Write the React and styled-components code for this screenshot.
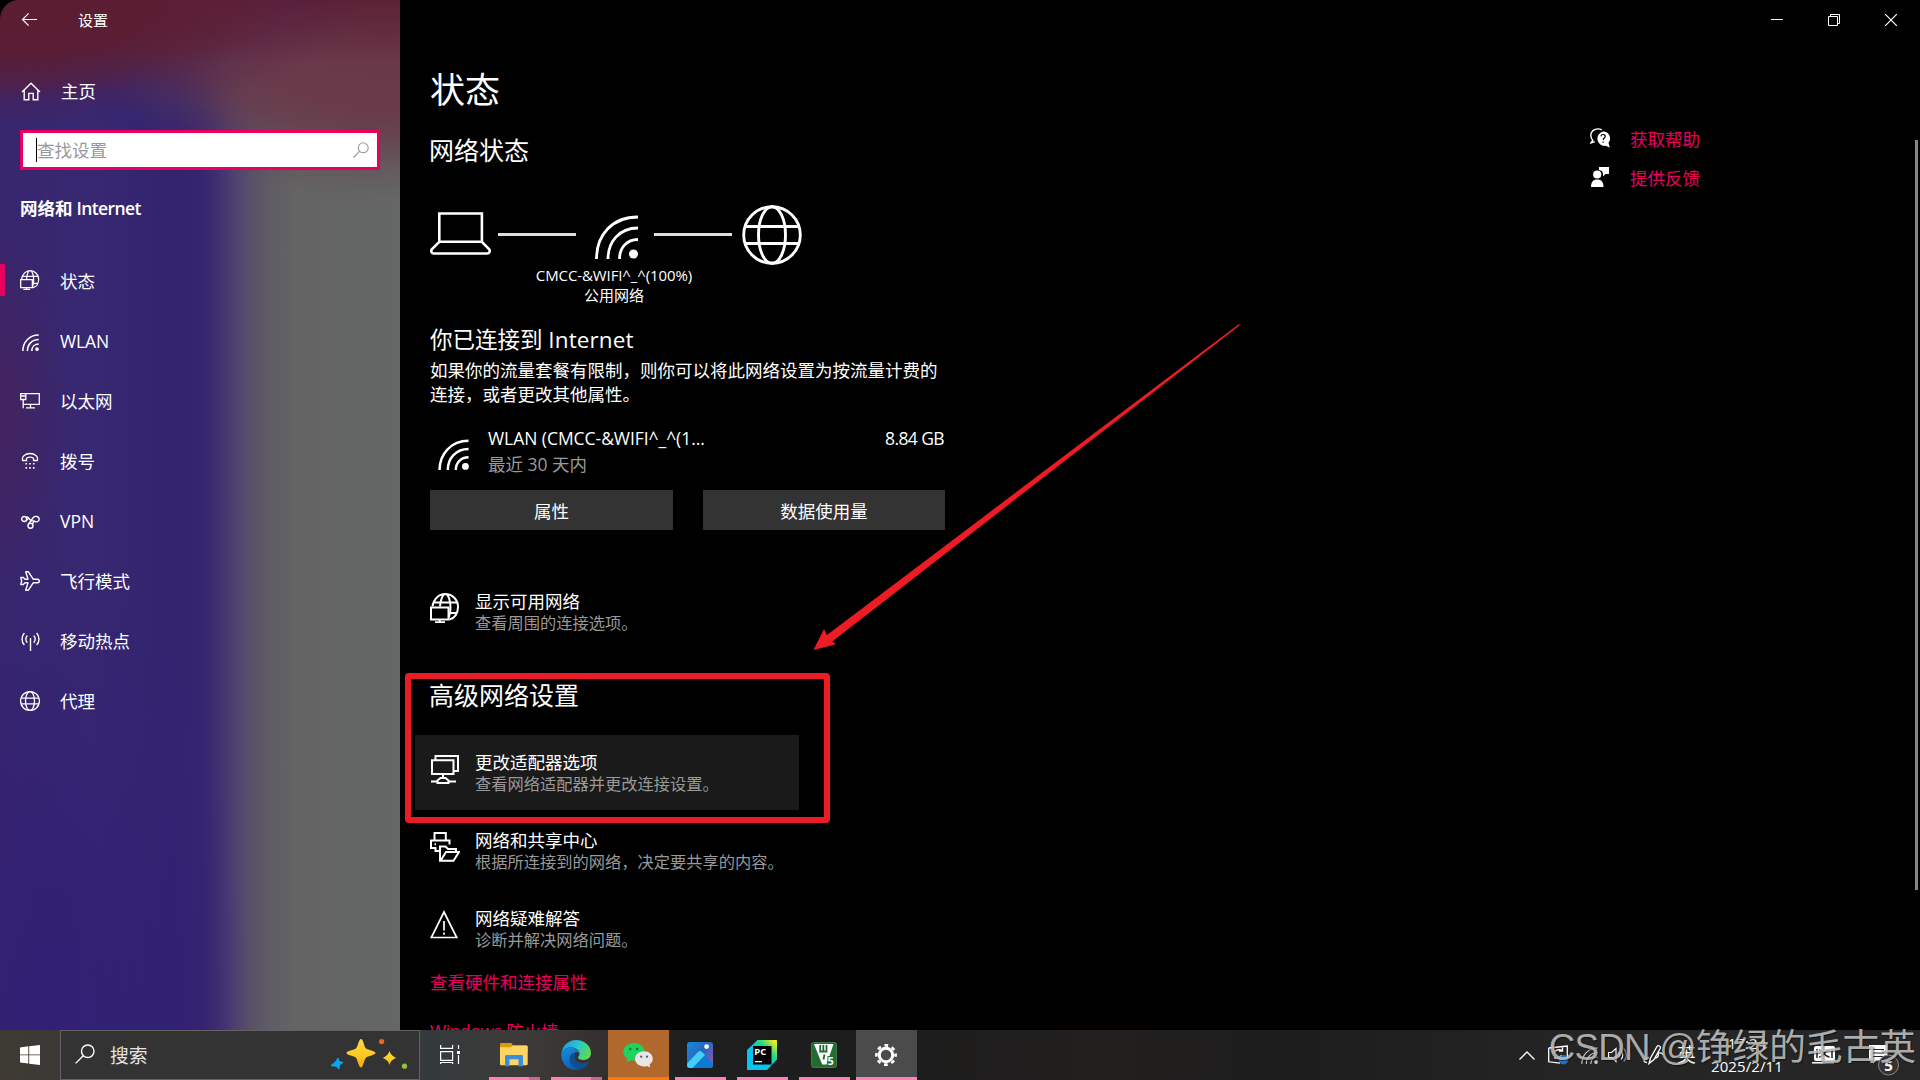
import React from 'react'
import styled, { createGlobalStyle, css } from 'styled-components'

const accent = '#e9005f'
const mark = '#ed1c24'

const GlobalStyle = createGlobalStyle`
  * { box-sizing: border-box; margin: 0; padding: 0; }
  body {
    background: #000;
    color: #fff;
    overflow: hidden;
    font-family: "Open Sans", "Noto Sans CJK SC", sans-serif;
    font-size: 17.5px;
  }
  svg { display: block; flex: none; }
`

const Desktop = styled.div`
  position: relative;
  width: 1920px;
  height: 1080px;
  display: flex;
  flex-direction: column;
  overflow: hidden;
  background: #000;
`

const Window = styled.div`
  display: flex;
  height: 1030px;
  overflow: hidden;
`

const Sidebar = styled.aside`
  width: 400px;
  flex: none;
  border-top-left-radius: 19px;
  display: flex;
  flex-direction: column;
  background:
    radial-gradient(ellipse 360px 125px at 0 0, #5b1d32, rgba(91, 29, 50, .96) 42%, rgba(90, 30, 56, .72) 64%, rgba(82, 30, 74, .3) 81%, rgba(80, 30, 80, 0)),
    linear-gradient(180deg, rgba(91, 29, 50, .85), rgba(91, 29, 50, 0) 62px),
    radial-gradient(ellipse 310px 200px at 385px 0, #673748 0, #6a394a 52%, rgba(104, 58, 74, .8) 68%, rgba(100, 66, 80, .35) 84%, rgba(100, 80, 85, 0) 100%),
    radial-gradient(ellipse 70px 190px at 0 410px, rgba(72, 34, 88, .75), rgba(72, 34, 88, 0)),
    radial-gradient(ellipse 200px 480px at 50px 1030px, rgba(46, 28, 118, .7), rgba(46, 28, 118, 0)),
    linear-gradient(90deg, #38266e 0, #372871 90px, #33236f 175px, #352571 203px, #402f70 218px, #4d4170 234px, #585069 250px, #5f5c65 270px, #636463 295px, #646765 400px);
`

const TitleRow = styled.div`
  height: 40px;
  display: flex;
  align-items: center;
  padding: 0 0 2px 20px;
  font-size: 15px;
  gap: 38px;
  svg { margin-top: 2px; }
`

const NavItem = styled.div`
  height: 60px;
  display: flex;
  align-items: center;
  gap: 20px;
  padding: 1px 0 0 15px;
  border-left: 5px solid transparent;
  border-image: ${({ $active }) => ($active
    ? `linear-gradient(transparent 15px, ${accent} 15px, ${accent} 45px, transparent 45px) 1`
    : 'none')};
  border-right: 0;
  svg { margin-top: -2px; }
`

const NavIcon = styled.span`
  width: 20px;
  display: flex;
  justify-content: center;
  margin-top: ${({ $drop = 0 }) => $drop * 2}px;
`

const HomeItem = styled(NavItem)`
  margin-top: 21px;
  padding: 0 0 1px 16px;
  svg { margin-top: 0; }
`

const SearchBox = styled.div`
  margin: 9px 20px 0;
  height: 40px;
  flex: none;
  border: 3px solid ${accent};
  background: #fff;
  color: #999;
  display: flex;
  align-items: center;
  padding: 0 8px 0 13px;
`

const Caret = styled.i`
  width: 1px;
  height: 24px;
  background: #000;
`

const Placeholder = styled.span`
  flex: 1;
  margin-top: -2px;
`

const Grow = styled.span`
  flex: 1;
`

const GroupName = styled.div`
  font-weight: 600;
  line-height: 30px;
  padding-left: 20px;
  margin: 23px 0 27px;
  letter-spacing: -.6px;
  b {
    font-weight: 700;
    letter-spacing: 0;
  }
`

const Main = styled.main`
  flex: 1;
  display: flex;
  flex-direction: column;
`

const Controls = styled.div`
  height: 40px;
  flex: none;
  display: flex;
  justify-content: flex-end;
  padding-right: 1px;
`

const Control = styled.div`
  width: 57px;
  height: 40px;
  display: grid;
  place-items: center;
`

const Body = styled.div`
  display: flex;
  flex: 1;
`

const Content = styled.section`
  width: 1190px;
  flex: none;
  padding: 28px 0 0 30px;
`

const PageTitle = styled.h1`
  font-size: 35px;
  line-height: 44px;
  font-weight: 400;
`

const SectionTitle = styled.h2`
  font-size: 25px;
  line-height: 30px;
  font-weight: 400;
  text-indent: -1px;
  margin-top: ${({ $top }) => $top}px;
`

const Diagram = styled.div`
  display: flex;
  align-items: center;
  height: 60px;
  margin-top: 40px;
`

const Wire = styled.span`
  width: 78px;
  height: 3px;
  background: #dedede;
  margin: -2px ${({ $right }) => $right}px 0 ${({ $left }) => $left}px;
`

const Caption = styled.div`
  width: 180px;
  margin-left: 94px;
  text-align: center;
  font-size: 15px;
  line-height: 20px;
`

const Connected = styled.h3`
  font-size: 22.5px;
  line-height: 30px;
  font-weight: 400;
  margin-top: 20px;
`

const Latin = styled.span`
  letter-spacing: ${({ $track }) => $track}px;
`

const Desc = styled.p`
  width: 515px;
  line-height: 24px;
  margin-top: 3px;
`

const Usage = styled.div`
  display: flex;
  width: 514px;
  height: 50px;
  margin-top: 20px;
  padding-left: 8px;
  line-height: 24px;
  svg { margin: 13px 19px 0 0; }
`

const UsageText = styled.div`
  flex: 1;
  display: flex;
  flex-direction: column;
  gap: 2px;
`

const Muted = styled.span`
  color: #999;
`

const Buttons = styled.div`
  display: grid;
  grid-template-columns: 243px 242px;
  gap: 30px;
  margin-top: 14px;
`

const Button = styled.button`
  height: 40px;
  border: 0;
  background: #333;
  color: #fff;
  font: inherit;
  padding-top: 1px;
`

const Row = styled.div`
  width: 384px;
  height: 75px;
  margin: ${({ $top = 3 }) => $top}px 0 0 -15px;
  padding: 15px 0 0 15px;
  display: flex;
  background: ${({ $hover }) => ($hover ? '#1a1a1a' : 'transparent')};
  svg { margin: 4px 15px 0 0; }
`

const RowText = styled.div`
  white-space: nowrap;
  line-height: 24px;
  small {
    display: block;
    font-size: 16.25px;
    line-height: 20px;
    color: #999;
  }
`

const Link = styled.a`
  display: block;
  color: ${accent};
  line-height: 24px;
  margin-top: ${({ $top }) => $top || 0}px;
`

const Help = styled.div`
  flex: 1;
  padding-top: 87px;
`

const HelpRow = styled.div`
  display: flex;
  gap: 20px;
  height: 39px;
  svg { margin-top: 1px; }
`

const Scrollbar = styled.div`
  width: 3px;
  height: 750px;
  margin: 100px 2px 0 0;
  background: #858585;
`

const Taskbar = styled.footer`
  height: 50px;
  flex: none;
  display: flex;
  background: linear-gradient(90deg, #3f3b34 0, #3a3935 60px, #3a3935 400px, #343a3c 430px, #3d3b39 520px, #34302f 600px, #1f1f1f 680px, #1c1c1c 880px, #221f1e 1100px, #1d1d1d 1300px, #242424 1560px, #272727 1920px);
`

const Start = styled.div`
  width: 60px;
  padding: 15px 0 0 20px;
`

const TaskSearch = styled.div`
  width: 360px;
  height: 50px;
  border: 1px solid #626262;
  background: #333;
  color: #e4e4e4;
  display: flex;
  align-items: center;
  padding: 0 10px 2px 14px;
  gap: 15px;
  font-size: 18.75px;
`

const TaskView = styled.div`
  width: 64px;
  padding: 15px 0 0 20px;
`

const TaskApp = styled.div`
  width: 61px;
  height: 50px;
  margin-right: 1px;
  display: flex;
  flex-direction: column;
  align-items: center;
  justify-content: space-between;
  background: ${({ $bg }) => $bg || 'transparent'};
`

const AppIcon = styled.div`
  height: 47px;
  display: grid;
  place-items: center;
  padding: 3px 2px 0 0;
`

const Underline = styled.span`
  height: 3px;
  width: ${({ $full }) => ($full ? '61px' : '51px')};
  background: ${({ $color }) => $color || '#ff80b5'};
  ${({ $stack }) => $stack && css`
    background: linear-gradient(90deg, #ff80b5 40px, #c4688f 40px);
  `}
`

const Tray = styled.div`
  margin-left: auto;
  width: 415px;
  display: flex;
  align-items: flex-start;
  padding-top: 12px;
`

const TrayCell = styled.div`
  width: ${({ $w }) => $w}px;
  height: 26px;
  display: flex;
  align-items: center;
  flex: none;
`

const Clock = styled.div`
  width: 102px;
  margin-top: -10px;
  padding-right: 28px;
  flex: none;
  text-align: center;
  font-size: 15px;
  line-height: 23px;
  white-space: nowrap;
  letter-spacing: .1px;
`

const Ime = styled.span`
  font-size: 18.75px;
  line-height: 22px;
  margin: -1px 0 0 -1px;
`

/* marks laid over the whole screen */
const Frame = styled.div`
  position: absolute;
  left: 405px;
  top: 673px;
  width: 425px;
  height: 150px;
  border: 6px solid ${mark};
  border-radius: 4px;
`

const Arrow = styled.svg`
  position: absolute;
  left: 800px;
  top: 310px;
`

const Watermark = styled.div`
  position: absolute;
  right: 4px;
  top: 1023px;
  line-height: 50px;
  font-family: "Liberation Sans", "Noto Sans CJK SC", sans-serif;
  font-size: 36.7px;
  white-space: nowrap;
  color: rgba(205, 205, 205, .82);
  text-shadow: 1px 1px 1px rgba(0, 0, 0, .5);
`

const line = { fill: 'none', stroke: '#fff' }

const BackIcon = () => (
  <svg width="20" height="20" viewBox="0 0 20 20" {...line} strokeWidth="1.2">
    <path d="M17 9.5H2.5M8.6 3.4 2.5 9.5l6.1 6.1" />
  </svg>
)

const HomeIcon = () => (
  <svg width="20" height="20" viewBox="0 0 20 20" {...line} strokeWidth="1.4">
    <path d="M1 11 10 2.2 19 11M3.2 9.2v9.6h4.6v-6.4h4.4v6.4h4.6V9.2" />
  </svg>
)

const SearchIcon = ({ size = 16, color = '#999', w = 1.1 }) => (
  <svg width={size} height={size} viewBox="0 0 16 16" fill="none" stroke={color} strokeWidth={w}>
    <circle cx="10.2" cy="5.8" r="5" />
    <path d="M6.6 9.4.5 15.5" />
  </svg>
)

const GlobePcIcon = ({ size = 20, w = 1.9 }) => (
  <svg width={size} height={size} viewBox="0 0 30 30" {...line} strokeWidth={w}>
    <path d="M2.5 13.5C3.3 6.5 8.6 1 15.2 1 22.4 1 28 6.8 28 14c0 6.5-3.6 11.5-8.5 12.5M3.5 9.5h23.5M20 20h7M10 13.5C10.5 7 12.6 1 15.2 1c3.2 0 5.3 6.5 5.3 13.5 0 4-.6 7.5-1.6 9.7" />
    <path d="M1 14.5h17.5v12H1zM9.7 26.5v3M5 29.2h10" />
  </svg>
)

const WifiIcon = ({ size = 20, w = 1.6, faded }) => (
  <svg width={size} height={size} viewBox="0 0 20 20" {...line} strokeWidth={w} opacity={faded ? 0.75 : 1}>
    <path d="M1 20C1 9.5 8.5 1.2 19.7 1.2M6.3 20C6.3 12.5 11.6 6.5 19.7 6.5M11.5 20c0-4.8 3.3-8.3 8.2-8.3" />
    <circle cx="17.7" cy="17.7" r="2.2" fill="#fff" stroke="none" />
  </svg>
)

const EthernetIcon = () => (
  <svg width="20" height="18" viewBox="0 0 20 18" {...line} strokeWidth="1.3">
    <path d="M6 1.7h13.3v10.6H3.2M10.5 12.3v3.4M6 15.9h9M.7 1.7h5.1v5.8H.7zM3.2 7.5v8.8M.7 4h5" />
  </svg>
)

const DialIcon = () => (
  <svg width="18" height="18" viewBox="0 0 18 18" {...line} strokeWidth="1.3">
    <path d="M1.7 8.5C.3 4.3 4.5 1.5 9 1.5s8.7 2.8 7.3 7H12.5V6.2C10.5 5 7.5 5 5.5 6.2v2.3z" />
    <path d="M4.5 11.8h1.6M8.2 11.8h1.6M11.9 11.8h1.6M4.5 15.9h1.6M8.2 15.9h1.6M11.9 15.9h1.6" strokeWidth="1.6" />
  </svg>
)

const VpnIcon = () => (
  <svg width="19" height="14" viewBox="0 0 19 14" {...line} strokeWidth="1.4">
    <circle cx="3.2" cy="4" r="2.5" />
    <circle cx="9.5" cy="10.7" r="2.5" />
    <path d="M5.5 5.2 8 3M5.5 2C7.2 1.5 8 3 8.8 4.300s2 2.200 3.700 1.200M7.600 8.800l4.700-6.300c1.500-1.800 5.900-1.500 5.900 1.700 0 2.700-3.300 3.300-5 1.800l-1.600 2.800" />
  </svg>
)

const PlaneIcon = () => (
  <svg width="20" height="20" viewBox="0 0 20 20" {...line} strokeWidth="1.4" strokeLinejoin="round">
    <path d="M.8 6.500h2.500L5 8.200h3L5.700.8h2.700l4.800 7.400h4.200c2.500 0 2.500 3.600 0 3.600h-4.200l-4.800 7.400H5.700L8 11.800H5l-1.700 1.700H.8L1.700 10z" />
  </svg>
)

const HotspotIcon = () => (
  <svg width="19" height="19" viewBox="0 0 19 19" {...line} strokeWidth="1.4">
    <path d="M3.400 1C.2 4.300.2 9.700 3.400 13M6.300 3.500c-2 2-2 5.200 0 7.200M15.600 1c3.200 3.300 3.200 8.700 0 12M12.700 3.500c2 2 2 5.200 0 7.200M9.500 6v13" />
  </svg>
)

const GlobeIcon = ({ size = 20, w = 2.9 }) => (
  <svg width={size} height={size} viewBox="0 0 60 60" {...line} strokeWidth={w}>
    <circle cx="30" cy="30" r="28.3" />
    <ellipse cx="30" cy="30" rx="13.5" ry="28.3" />
    <path d="M3 21.500h54M3 38.500h54" />
  </svg>
)

const LaptopIcon = styled(({ className }) => (
  <svg className={className} width="61" height="43" viewBox="0 0 61 43" {...line} strokeWidth="2.6">
    <path d="M9.300 1.500h42.600v28.300H9.300zM9.300 29.800l-7.500 7.500c-1.300 2 0 4.200 2 4.200h53.400c2 0 3.300-2.200 2-4.200l-7.300-7.500" />
  </svg>
))`
  margin-top: -3px;
`

const BigWifi = styled(({ className }) => (
  <svg className={className} width="43" height="60" viewBox="0 0 43 60" {...line} strokeWidth="2.8">
    <path d="M1.500 54C1.500 30 17 12 43 12M13 54c0-17 11-31 30-31M24.500 54c0-11 7-19.500 18.500-19.500" />
    <circle cx="38.500" cy="49" r="4.500" fill="#fff" stroke="none" />
  </svg>
))`
  margin-top: -1px;
`

const AdapterIcon = () => (
  <svg width="30" height="30" viewBox="0 0 30 30" {...line} strokeWidth="2">
    <path d="M5.500 6V2H28v15h-4M2 6.300h21.500V20H2zM13 20v4M1 27.500h6.500M18.500 27.500H26M7.500 29v-2.500l3-2.500h5l3 2.500V29z" />
  </svg>
)

const SharingIcon = () => (
  <svg width="30" height="30" viewBox="0 0 30 30" {...line} strokeWidth="2">
    <path d="M4.500 8V1h11.300v7M10 19H5.500v-3H1V8.500h18.500v4M4.500 12.300H6" />
    <path d="M10 29V14.500h5.500L18 17h8v3M10.500 28.700 16 20h13l-5.500 8.700z" />
  </svg>
)

const WarnIcon = () => (
  <svg width="30" height="30" viewBox="0 0 30 30" {...line} strokeWidth="1.7">
    <path d="M14 2 1.300 27.500h25.400zM14 11v9.500M14 22.500v2.200" />
  </svg>
)

const AskIcon = () => (
  <svg width="20" height="20" viewBox="0 0 20 20">
    <path d="M11.700 1.800C7.500-.5 1 1.700.8 7.300c0 2.300.9 3.900 1.900 5L.8 15l4-1.300" fill="none" stroke="#fff" strokeWidth="1.4" />
    <path d="M13.300 3.500a6.700 6.900 0 0 1 5.200 11.300l1.300 4.700-4.300-1.700A6.800 7 0 1 1 13.300 3.500z" fill="#fff" />
    <path d="M11 8.400c.3-2.700 4.400-2.400 4.200.1-.1 1.500-2 1.700-2 3.600M13.200 13.400v1.400" fill="none" stroke="#000" strokeWidth="1.2" />
  </svg>
)

const FeedbackIcon = () => (
  <svg width="20" height="20" viewBox="0 0 20 20" fill="#fff">
    <path d="M9 0h10v7h-3.500L13 9.500V7l-1-3-3-1z" />
    <circle cx="7.200" cy="7.500" r="4.100" />
    <path d="M1 20c0-5 2-7.500 6.200-7.500S13.500 15 13.500 20z" />
  </svg>
)

const StartIcon = () => (
  <svg width="20" height="20" viewBox="0 0 20 20" fill="#fff">
    <path d="M0 2.500 8.300 1.300v8.100H0zM9.200 1.200 20 0v9.400H9.200zM0 10.300h8.300v8.300L0 17.500zM9.200 10.300H20V20L9.200 18.700z" />
  </svg>
)

const SparkleIcon = () => (
  <svg width="78" height="32" viewBox="0 0 78 32">
    <defs>
      <linearGradient id="gold" x1="0" y1="0" x2="0" y2="1">
        <stop offset="0" stopColor="#ffd84a" />
        <stop offset=".6" stopColor="#fdc91c" />
        <stop offset="1" stopColor="#f5a21a" />
      </linearGradient>
    </defs>
    <path d="M30 1c2.200 0 3.200 8 5 9.500S44.500 13 44.500 15 37 17.800 35 19.700 32.200 29.500 30 29.500s-3.400-8-5-9.800-9.500-2.500-9.500-4.700 7.700-2.800 9.500-4.500S27.800 1 30 1z" fill="url(#gold)" />
    <path d="M58.500 13c1.300 3.500 2.700 5 6.800 7-4.100 1.600-5.500 3.200-6.800 7-1.300-3.800-2.700-5.400-6.800-7 4.100-2 5.500-3.500 6.800-7z" fill="url(#gold)" />
    <path d="M7 20.500c.5 3 1 3.500 4.500 4-3 1.500-3.700 2-3.500 6-2-2.500-3-3-7.500-3 3-2 5.500-3 6.500-7z" fill="#10a5ea" stroke="#10a5ea" strokeWidth="1.5" strokeLinejoin="round" />
    <circle cx="50.600" cy="3.600" r="2.600" fill="#f26522" />
    <circle cx="73.500" cy="28.200" r="2.600" fill="#8cc63f" />
  </svg>
)

const TaskViewIcon = () => (
  <svg width="20" height="20" viewBox="0 0 20 20" {...line} strokeWidth="1.2">
    <path d="M.6 0v3.400h12V0M.6 6.600h12v8.800H.6zM.6 19v-1.500h12V19M18.500 0v4M18.500 10v9" />
    <path d="M17 6h3v3h-3z" fill="#fff" stroke="none" />
  </svg>
)

const FolderIcon = () => (
  <svg width="28" height="24" viewBox="0 0 28 24">
    <path d="M0 1.500C0 .5.500 0 1.500 0h9.700l2 2.500H26c1 0 1.700.7 1.700 1.500V9H0z" fill="#e09a09" />
    <path d="M0 4.200h11l2-1.700h13c1 0 1.700.7 1.700 1.500v16.800c0 1-.7 1.500-1.700 1.500H1.500c-1 0-1.500-.5-1.500-1.500z" fill="#fed463" />
    <path d="M5 23.300V13.500c0-1 .6-1.500 1.500-1.500h15c1 0 1.500.5 1.500 1.500v9.800h-4.500v-7h-9v7z" fill="#3a8fdb" />
  </svg>
)

const EdgeIcon = () => (
  <svg width="30" height="30" viewBox="0 0 30 30">
    <defs>
      <linearGradient id="edgeTop" x1="0" y1=".3" x2="1" y2=".6">
        <stop offset="0" stopColor="#1f9fe0" />
        <stop offset=".5" stopColor="#2cc3cf" />
        <stop offset="1" stopColor="#5fdd4a" />
      </linearGradient>
      <linearGradient id="edgeLow" x1="0" y1="0" x2=".7" y2="1">
        <stop offset="0" stopColor="#1890e0" />
        <stop offset="1" stopColor="#0b55a4" />
      </linearGradient>
    </defs>
    <path d="M.5 13C1.500 5.500 7.500 0 15 0c8.500 0 15 6 15 13 0 4-3 7-7.300 7-3.500 0-5.700-1.200-5.700-2.500 0-1 1.500-1.500 1.500-4 0-3.500-4-6-8.500-6C5.500 7.500 2 9.500.5 13z" fill="url(#edgeTop)" />
    <path d="M.3 16C-.5 10 5 7.500 10 7.500c4.500 0 8.500 2.500 8.500 6-2-2.500-7.500-1.800-7.800 4-.2 6 5.500 9.500 12 7.500l4.800-2C25 27.500 20 30 15 30 7 30 1 24 .3 16z" fill="url(#edgeLow)" />
    <path d="M10.700 13.800C6.500 18 8.500 28 18 29.700c4-.8 7.500-3.300 9.700-7 .2-.8-.4-1-1-.6-5 2.500-11.500.9-12.900-3.600-.5-1.700-.1-3.500 1-4.700-1.500-.6-3-.5-4.100 0z" fill="#0d4f97" />
  </svg>
)

const WechatIcon = () => (
  <svg width="30" height="26" viewBox="0 0 30 26">
    <path d="M11 1C5 1 .3 4.800.3 9.800c0 3 1.500 5.300 3.900 6.900L3.500 20.500l4.200-2.300c6.500 1.700 13.800-2 13.800-8.400C21.500 4.800 17 1 11 1z" fill="#1fd15d" />
    <path d="M21 9.300c-5 0-9 3.300-9 7.500s4 7.600 9 7.600c1 0 2-.1 2.900-.5l3.400 1.700-.7-3c2-1.500 3.200-3.500 3.200-5.800C29.800 12.600 26 9.300 21 9.300z" fill="#e6e6e6" />
    <g fill="#0c7a37"><circle cx="7.200" cy="7" r="1.300" /><circle cx="14.200" cy="7" r="1.300" /></g>
    <g fill="#555"><circle cx="18.200" cy="14.700" r="1.100" /><circle cx="24" cy="14.700" r="1.100" /></g>
  </svg>
)

const PhotosIcon = () => (
  <svg width="26" height="26" viewBox="0 0 26 26">
    <defs>
      <linearGradient id="photo" x1="0" y1="0" x2="1" y2=".8">
        <stop offset="0" stopColor="#168be0" />
        <stop offset=".5" stopColor="#2668bd" />
        <stop offset="1" stopColor="#8a57ba" />
      </linearGradient>
    </defs>
    <rect width="26" height="26" rx="3" fill="url(#photo)" />
    <path d="M0 21.500 11 10c1.200-1.200 2.700-1.200 4 0l11 11.500V23c0 2-1 3-3 3H3c-2 0-3-1-3-3z" fill="#0c7bd0" />
    <path d="M0 21.500 11 10c1.200-1.200 2.700-1.200 4 0l3 3L5.500 26H3c-2 0-3-1-3-3z" fill="#43cdf8" />
    <circle cx="19.600" cy="4.600" r="2.400" fill="#fff" />
  </svg>
)

const PycharmIcon = () => (
  <svg width="30" height="30" viewBox="0 0 30 30">
    <defs>
      <linearGradient id="pycharm" x1="0" y1="1" x2="1" y2="0">
        <stop offset=".45" stopColor="#07c3f2" />
        <stop offset=".68" stopColor="#21d789" />
        <stop offset=".95" stopColor="#f5f015" />
      </linearGradient>
    </defs>
    <path d="M10.500 0H29c.7 0 1 .4 1 1v18.500L20 30H1c-.6 0-1-.4-1-1V10z" fill="url(#pycharm)" />
    <path d="M6 6h18.500v18.500H6z" fill="#000" />
    <text x="7.300" y="15" fontSize="9.500" fontWeight="700" fill="#fff" fontFamily="Open Sans, sans-serif">PC</text>
    <path d="M8 21h7v1.300H8z" fill="#fff" />
  </svg>
)

const KeilIcon = () => (
  <svg width="26" height="26" viewBox="0 0 26 26">
    <rect x=".5" y=".5" width="25" height="25" rx="2" fill="#226b31" stroke="#3f7b4a" />
    <path d="M3 2h19.500l-6.800 20.500h-4.500z" fill="#fff" />
    <path d="M9.200 3v6.500h3.100V3M12.300 9.500h3.200V3M13.500 12.500l-1 5" fill="none" stroke="#226b31" strokeWidth="1.8" />
    <text x="16.600" y="23.300" fontSize="11" fontWeight="700" fill="#fff" stroke="#226b31" strokeWidth="2" paintOrder="stroke" fontFamily="Open Sans, sans-serif">5</text>
  </svg>
)

const GearIcon = () => (
  <svg width="22" height="22" viewBox="0 0 22 22" fill="none" stroke="#fff">
    <circle cx="11" cy="11" r="6.700" strokeWidth="3" />
    <circle cx="11" cy="11" r="9.600" strokeWidth="2.600" strokeDasharray="3.770 3.770" strokeDashoffset="1.880" />
  </svg>
)

const ChevronIcon = () => (
  <svg width="16" height="9" viewBox="0 0 16 9" {...line} strokeWidth="1.3"><path d="M.5 8.500 8 1l7.500 7.500" /></svg>
)

const SyncIcon = () => (
  <svg width="21" height="20" viewBox="0 0 21 20" {...line} strokeWidth="1.3">
    <path d="m.7 3 18.600-2v12M.7 3v13.800L12 18.200M6 7V4.500M14 5.500c-3-2-7-.5-7.700 2.500M14.500 2.500v3.500H11M6 12.500c3 2 6.500.5 7.500-2.500" />
    <circle cx="15.500" cy="14.800" r="4.700" fill="#2672c4" stroke="none" />
  </svg>
)

const SpeakerIcon = () => (
  <svg width="20" height="16" viewBox="0 0 20 16" {...line} strokeWidth="1.1">
    <path d="M.6 5.500h3L8 1.500v13l-4.400-4h-3zM10.500 5.500c1.300 1.500 1.300 3.500 0 5M13 3.500c2.300 2.500 2.300 6.500 0 9" />
    <path d="M15.700 1.500c3.500 3.500 3.500 9.500 0 13" opacity=".45" />
  </svg>
)

const PenIcon = () => (
  <svg width="22" height="22" viewBox="0 0 22 22" {...line} strokeWidth="1.3">
    <path d="M6 19.500 7.500 14 14 2.500c1-1.700 4.300-.3 3.300 1.800L11 15.500zM6 13.500c-5 1-7 5-2 5M12 14c3 0 4-3 3-4s3-2 5 .5" />
  </svg>
)

const KeyboardIcon = () => (
  <svg width="24" height="18" viewBox="0 0 24 18">
    <rect x="2" y="0" width="21" height="15" rx="2" fill="#fff" />
    <path d="M5 3v9M20 3v9M7 4c5 0 5 7 10.500 7M7 11c5 0 5-7 10.500-7" fill="none" stroke="#222" strokeWidth="1.5" />
    <path d="M0 16.800h22" stroke="#fff" strokeWidth="1.5" />
  </svg>
)

const NoticeIcon = styled(({ className }) => (
  <svg className={className} width="32" height="32" viewBox="0 0 32 32">
    <path d="M0 0h18.500v15.500H7L4 19v-3.500H0z" fill="#fff" />
    <path d="M3.500 4.500h11.500M3.500 8h11.500M3.500 11.500h11.500" stroke="#252525" strokeWidth="1.2" />
    <circle cx="19.500" cy="20" r="10" fill="#333" stroke="#888" />
    <text x="19.500" y="25.500" textAnchor="middle" fontSize="15" fontWeight="700" fill="#fff" fontFamily="Open Sans, sans-serif">5</text>
  </svg>
))`
  margin-top: 12px;
`

const nav = [
  { label: '状态', icon: <GlobePcIcon />, active: true },
  { label: 'WLAN', icon: <WifiIcon size={17} w={1.8} />, drop: 3 },
  { label: '以太网', icon: <EthernetIcon />, drop: 1 },
  { label: '拨号', icon: <DialIcon />, drop: 1 },
  { label: 'VPN', icon: <VpnIcon />, drop: 2 },
  { label: '飞行模式', icon: <PlaneIcon />, drop: 1 },
  { label: '移动热点', icon: <HotspotIcon />, drop: 2 },
  { label: '代理', icon: <GlobeIcon w={4} />, drop: 1 },
]

const apps = [
  { id: 'files', icon: <FolderIcon />, stack: true },
  { id: 'edge', icon: <EdgeIcon />, stack: true },
  { id: 'wechat', icon: <WechatIcon />, full: true, bg: '#b0682c', color: '#ff7800' },
  { id: 'photos', icon: <PhotosIcon /> },
  { id: 'pycharm', icon: <PycharmIcon /> },
  { id: 'keil', icon: <KeilIcon /> },
  { id: 'settings', icon: <GearIcon />, full: true, bg: '#4b4b4b' },
]

const OptionRow = ({ icon, title, sub, ...rest }) => (
  <Row {...rest}>
    {icon}
    <RowText>{title}<small>{sub}</small></RowText>
  </Row>
)

const App = () => (
  <Desktop>
    <GlobalStyle />
    <Window>
      <Sidebar>
        <TitleRow><BackIcon />设置</TitleRow>
        <HomeItem><HomeIcon />主页</HomeItem>
        <SearchBox>
          <Caret /><Placeholder>查找设置</Placeholder><SearchIcon />
        </SearchBox>
        <GroupName><b>网络和</b> Internet</GroupName>
        {nav.map(n => (
          <NavItem key={n.label} $active={n.active}>
            <NavIcon $drop={n.drop}>{n.icon}</NavIcon>
            <Latin $track={n.label === 'WLAN' ? -0.1 : 0}>{n.label}</Latin>
          </NavItem>
        ))}
      </Sidebar>
      <Main>
        <Controls>
          <Control><svg width="12" height="12" viewBox="0 0 12 12" {...line}><path d="M0 5.500h12" /></svg></Control>
          <Control><svg width="12" height="12" viewBox="0 0 12 12" {...line}><path d="M.5 2.500h9v9h-9zM2.500 2.500v-2h9v9h-2" /></svg></Control>
          <Control><svg width="12" height="12" viewBox="0 0 12 12" {...line} strokeWidth="1.2"><path d="m0 0 12 12M12 0 0 12" /></svg></Control>
        </Controls>
        <Body>
          <Content>
            <PageTitle>状态</PageTitle>
            <SectionTitle $top={23}>网络状态</SectionTitle>
            <Diagram>
              <LaptopIcon />
              <Wire $left={7} $right={19} />
              <BigWifi />
              <Wire $left={16} $right={10} />
              <GlobeIcon size={60} />
            </Diagram>
            <Caption><Latin $track={-0.1}>CMCC-&amp;WIFI^_^(100%)</Latin><br />公用网络</Caption>
            <Connected>你已连接到 <Latin $track={0.1}>Internet</Latin></Connected>
            <Desc>如果你的流量套餐有限制，则你可以将此网络设置为按流量计费的连接，或者更改其他属性。</Desc>
            <Usage>
              <WifiIcon size={31} w={1.6} />
              <UsageText>
                <Latin $track={-0.05}>WLAN (CMCC-&amp;WIFI^_^(1...</Latin>
                <Muted>最近 30 天内</Muted>
              </UsageText>
              <Latin $track={-0.6}>8.84 GB</Latin>
            </Usage>
            <Buttons>
              <Button>属性</Button>
              <Button>数据使用量</Button>
            </Buttons>
            <OptionRow $top={44} icon={<GlobePcIcon size={30} w={2} />} title="显示可用网络" sub="查看周围的连接选项。" />
            <SectionTitle $top={31}>高级网络设置</SectionTitle>
            <OptionRow $top={25} $hover icon={<AdapterIcon />} title="更改适配器选项" sub="查看网络适配器并更改连接设置。" />
            <OptionRow icon={<SharingIcon />} title="网络和共享中心" sub="根据所连接到的网络，决定要共享的内容。" />
            <OptionRow icon={<WarnIcon />} title="网络疑难解答" sub="诊断并解决网络问题。" />
            <Link $top={4}>查看硬件和连接属性</Link>
            <Link $top={25}><Latin $track={-0.4}>Windows</Latin> 防火墙</Link>
          </Content>
          <Help>
            <HelpRow><AskIcon /><Link>获取帮助</Link></HelpRow>
            <HelpRow><FeedbackIcon /><Link>提供反馈</Link></HelpRow>
          </Help>
          <Scrollbar />
        </Body>
      </Main>
    </Window>
    <Taskbar>
      <Start><StartIcon /></Start>
      <TaskSearch>
        <SearchIcon size={20} color="#fff" />
        <Grow>搜索</Grow>
        <SparkleIcon />
      </TaskSearch>
      <TaskView><TaskViewIcon /></TaskView>
      {apps.map(a => (
        <TaskApp key={a.id} $bg={a.bg}>
          <AppIcon>{a.icon}</AppIcon>
          <Underline $full={a.full} $color={a.color} $stack={a.stack} />
        </TaskApp>
      ))}
      <Tray>
        <TrayCell $w={43}><Grow /><ChevronIcon /><Grow /></TrayCell>
        <TrayCell $w={33}><SyncIcon /></TrayCell>
        <TrayCell $w={27}><WifiIcon size={17} w={1.3} faded /></TrayCell>
        <TrayCell $w={35}><SpeakerIcon /></TrayCell>
        <TrayCell $w={35}><PenIcon /></TrayCell>
        <TrayCell $w={32}><Ime>英</Ime></TrayCell>
        <Clock>17:24<br />2025/2/11</Clock>
        <TrayCell $w={57}><KeyboardIcon /></TrayCell>
        <TrayCell $w={46}><NoticeIcon /></TrayCell>
      </Tray>
    </Taskbar>
    <Frame />
    <Arrow width="450" height="350" viewBox="0 0 450 350" fill={mark}>
      <path d="M13.500 340 24 319l3 6L439 14l.8 1.200L32.200 331.500l3.800 2.800z" />
    </Arrow>
    <Watermark><Latin $track={-0.7}>CSDN @</Latin>铮绿的毛古英</Watermark>
  </Desktop>
)

export default App
